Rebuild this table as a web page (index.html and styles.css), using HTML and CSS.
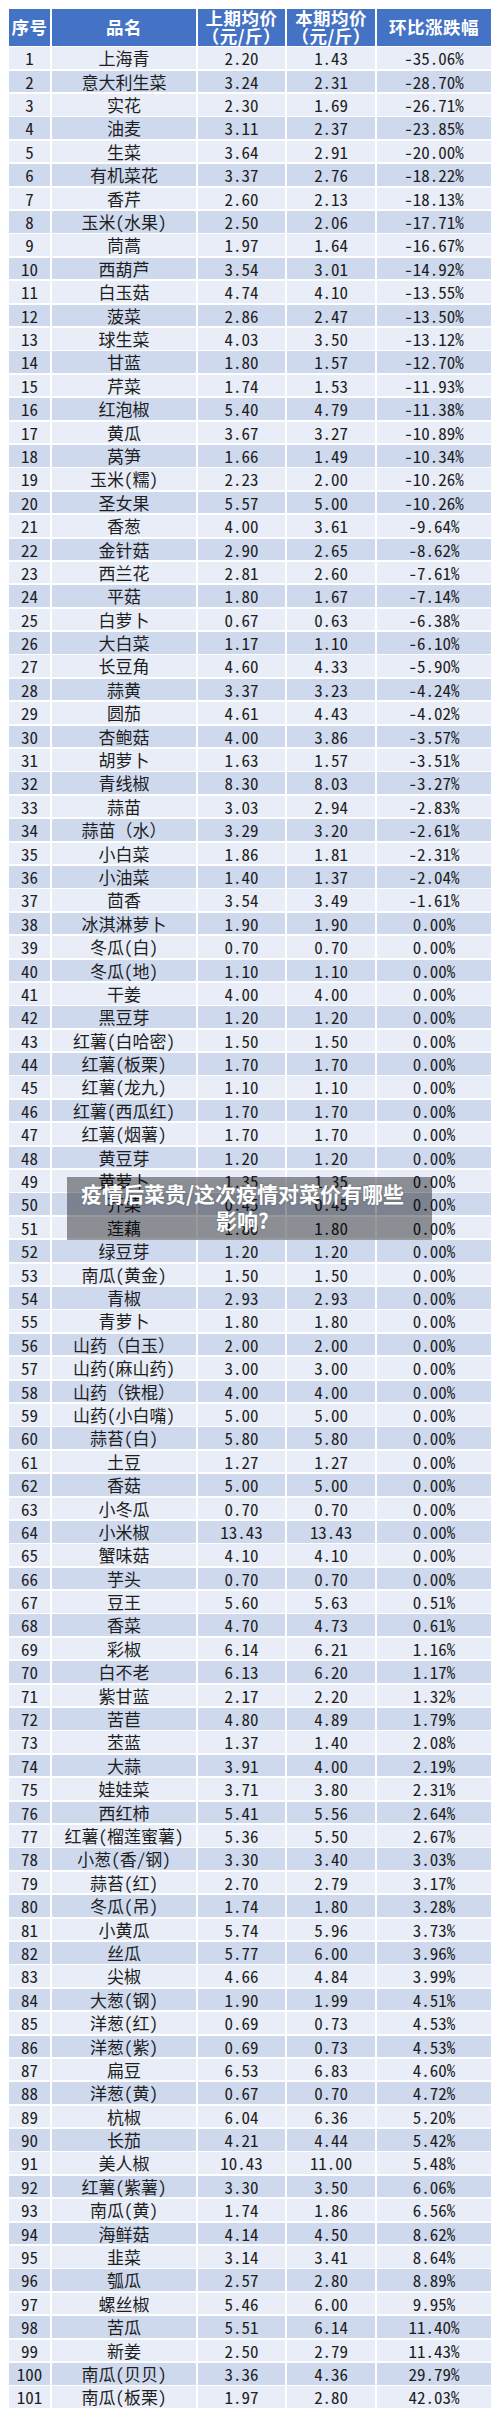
FILE: index.html
```html
<!DOCTYPE html>
<html lang="zh-CN">
<head>
<meta charset="utf-8">
<title>疫情后菜贵/这次疫情对菜价有哪些影响?</title>
<link rel="stylesheet" href="styles.css">
</head>
<body>
<div class="page">
  <div class="table">
    <div class="row head">
      <div class="c">序号</div>
      <div class="c">品名</div>
      <div class="c two">上期均价<br>（元/斤）</div>
      <div class="c two">本期均价<br>（元/斤）</div>
      <div class="c">环比涨跌幅</div>
    </div>
    <div class="tbody">
      <div class="row"><div class="c">1</div><div class="c n">上海青</div><div class="c">2.20</div><div class="c">1.43</div><div class="c">-35.06%</div></div>
      <div class="row"><div class="c">2</div><div class="c n">意大利生菜</div><div class="c">3.24</div><div class="c">2.31</div><div class="c">-28.70%</div></div>
      <div class="row"><div class="c">3</div><div class="c n">实花</div><div class="c">2.30</div><div class="c">1.69</div><div class="c">-26.71%</div></div>
      <div class="row"><div class="c">4</div><div class="c n">油麦</div><div class="c">3.11</div><div class="c">2.37</div><div class="c">-23.85%</div></div>
      <div class="row"><div class="c">5</div><div class="c n">生菜</div><div class="c">3.64</div><div class="c">2.91</div><div class="c">-20.00%</div></div>
      <div class="row"><div class="c">6</div><div class="c n">有机菜花</div><div class="c">3.37</div><div class="c">2.76</div><div class="c">-18.22%</div></div>
      <div class="row"><div class="c">7</div><div class="c n">香芹</div><div class="c">2.60</div><div class="c">2.13</div><div class="c">-18.13%</div></div>
      <div class="row"><div class="c">8</div><div class="c n">玉米(水果)</div><div class="c">2.50</div><div class="c">2.06</div><div class="c">-17.71%</div></div>
      <div class="row"><div class="c">9</div><div class="c n">茼蒿</div><div class="c">1.97</div><div class="c">1.64</div><div class="c">-16.67%</div></div>
      <div class="row"><div class="c">10</div><div class="c n">西葫芦</div><div class="c">3.54</div><div class="c">3.01</div><div class="c">-14.92%</div></div>
      <div class="row"><div class="c">11</div><div class="c n">白玉菇</div><div class="c">4.74</div><div class="c">4.10</div><div class="c">-13.55%</div></div>
      <div class="row"><div class="c">12</div><div class="c n">菠菜</div><div class="c">2.86</div><div class="c">2.47</div><div class="c">-13.50%</div></div>
      <div class="row"><div class="c">13</div><div class="c n">球生菜</div><div class="c">4.03</div><div class="c">3.50</div><div class="c">-13.12%</div></div>
      <div class="row"><div class="c">14</div><div class="c n">甘蓝</div><div class="c">1.80</div><div class="c">1.57</div><div class="c">-12.70%</div></div>
      <div class="row"><div class="c">15</div><div class="c n">芹菜</div><div class="c">1.74</div><div class="c">1.53</div><div class="c">-11.93%</div></div>
      <div class="row"><div class="c">16</div><div class="c n">红泡椒</div><div class="c">5.40</div><div class="c">4.79</div><div class="c">-11.38%</div></div>
      <div class="row"><div class="c">17</div><div class="c n">黄瓜</div><div class="c">3.67</div><div class="c">3.27</div><div class="c">-10.89%</div></div>
      <div class="row"><div class="c">18</div><div class="c n">莴笋</div><div class="c">1.66</div><div class="c">1.49</div><div class="c">-10.34%</div></div>
      <div class="row"><div class="c">19</div><div class="c n">玉米(糯)</div><div class="c">2.23</div><div class="c">2.00</div><div class="c">-10.26%</div></div>
      <div class="row"><div class="c">20</div><div class="c n">圣女果</div><div class="c">5.57</div><div class="c">5.00</div><div class="c">-10.26%</div></div>
      <div class="row"><div class="c">21</div><div class="c n">香葱</div><div class="c">4.00</div><div class="c">3.61</div><div class="c">-9.64%</div></div>
      <div class="row"><div class="c">22</div><div class="c n">金针菇</div><div class="c">2.90</div><div class="c">2.65</div><div class="c">-8.62%</div></div>
      <div class="row"><div class="c">23</div><div class="c n">西兰花</div><div class="c">2.81</div><div class="c">2.60</div><div class="c">-7.61%</div></div>
      <div class="row"><div class="c">24</div><div class="c n">平菇</div><div class="c">1.80</div><div class="c">1.67</div><div class="c">-7.14%</div></div>
      <div class="row"><div class="c">25</div><div class="c n">白萝卜</div><div class="c">0.67</div><div class="c">0.63</div><div class="c">-6.38%</div></div>
      <div class="row"><div class="c">26</div><div class="c n">大白菜</div><div class="c">1.17</div><div class="c">1.10</div><div class="c">-6.10%</div></div>
      <div class="row"><div class="c">27</div><div class="c n">长豆角</div><div class="c">4.60</div><div class="c">4.33</div><div class="c">-5.90%</div></div>
      <div class="row"><div class="c">28</div><div class="c n">蒜黄</div><div class="c">3.37</div><div class="c">3.23</div><div class="c">-4.24%</div></div>
      <div class="row"><div class="c">29</div><div class="c n">圆茄</div><div class="c">4.61</div><div class="c">4.43</div><div class="c">-4.02%</div></div>
      <div class="row"><div class="c">30</div><div class="c n">杏鲍菇</div><div class="c">4.00</div><div class="c">3.86</div><div class="c">-3.57%</div></div>
      <div class="row"><div class="c">31</div><div class="c n">胡萝卜</div><div class="c">1.63</div><div class="c">1.57</div><div class="c">-3.51%</div></div>
      <div class="row"><div class="c">32</div><div class="c n">青线椒</div><div class="c">8.30</div><div class="c">8.03</div><div class="c">-3.27%</div></div>
      <div class="row"><div class="c">33</div><div class="c n">蒜苗</div><div class="c">3.03</div><div class="c">2.94</div><div class="c">-2.83%</div></div>
      <div class="row"><div class="c">34</div><div class="c n">蒜苗（水）</div><div class="c">3.29</div><div class="c">3.20</div><div class="c">-2.61%</div></div>
      <div class="row"><div class="c">35</div><div class="c n">小白菜</div><div class="c">1.86</div><div class="c">1.81</div><div class="c">-2.31%</div></div>
      <div class="row"><div class="c">36</div><div class="c n">小油菜</div><div class="c">1.40</div><div class="c">1.37</div><div class="c">-2.04%</div></div>
      <div class="row"><div class="c">37</div><div class="c n">茴香</div><div class="c">3.54</div><div class="c">3.49</div><div class="c">-1.61%</div></div>
      <div class="row"><div class="c">38</div><div class="c n">冰淇淋萝卜</div><div class="c">1.90</div><div class="c">1.90</div><div class="c">0.00%</div></div>
      <div class="row"><div class="c">39</div><div class="c n">冬瓜(白)</div><div class="c">0.70</div><div class="c">0.70</div><div class="c">0.00%</div></div>
      <div class="row"><div class="c">40</div><div class="c n">冬瓜(地)</div><div class="c">1.10</div><div class="c">1.10</div><div class="c">0.00%</div></div>
      <div class="row"><div class="c">41</div><div class="c n">干姜</div><div class="c">4.00</div><div class="c">4.00</div><div class="c">0.00%</div></div>
      <div class="row"><div class="c">42</div><div class="c n">黑豆芽</div><div class="c">1.20</div><div class="c">1.20</div><div class="c">0.00%</div></div>
      <div class="row"><div class="c">43</div><div class="c n">红薯(白哈密)</div><div class="c">1.50</div><div class="c">1.50</div><div class="c">0.00%</div></div>
      <div class="row"><div class="c">44</div><div class="c n">红薯(板栗)</div><div class="c">1.70</div><div class="c">1.70</div><div class="c">0.00%</div></div>
      <div class="row"><div class="c">45</div><div class="c n">红薯(龙九)</div><div class="c">1.10</div><div class="c">1.10</div><div class="c">0.00%</div></div>
      <div class="row"><div class="c">46</div><div class="c n">红薯(西瓜红)</div><div class="c">1.70</div><div class="c">1.70</div><div class="c">0.00%</div></div>
      <div class="row"><div class="c">47</div><div class="c n">红薯(烟薯)</div><div class="c">1.70</div><div class="c">1.70</div><div class="c">0.00%</div></div>
      <div class="row"><div class="c">48</div><div class="c n">黄豆芽</div><div class="c">1.20</div><div class="c">1.20</div><div class="c">0.00%</div></div>
      <div class="row"><div class="c">49</div><div class="c n">黄萝卜</div><div class="c">1.35</div><div class="c">1.35</div><div class="c">0.00%</div></div>
      <div class="row"><div class="c">50</div><div class="c n">芥菜</div><div class="c">0.45</div><div class="c">0.45</div><div class="c">0.00%</div></div>
      <div class="row"><div class="c">51</div><div class="c n">莲藕</div><div class="c">1.80</div><div class="c">1.80</div><div class="c">0.00%</div></div>
      <div class="row"><div class="c">52</div><div class="c n">绿豆芽</div><div class="c">1.20</div><div class="c">1.20</div><div class="c">0.00%</div></div>
      <div class="row"><div class="c">53</div><div class="c n">南瓜(黄金)</div><div class="c">1.50</div><div class="c">1.50</div><div class="c">0.00%</div></div>
      <div class="row"><div class="c">54</div><div class="c n">青椒</div><div class="c">2.93</div><div class="c">2.93</div><div class="c">0.00%</div></div>
      <div class="row"><div class="c">55</div><div class="c n">青萝卜</div><div class="c">1.80</div><div class="c">1.80</div><div class="c">0.00%</div></div>
      <div class="row"><div class="c">56</div><div class="c n">山药（白玉）</div><div class="c">2.00</div><div class="c">2.00</div><div class="c">0.00%</div></div>
      <div class="row"><div class="c">57</div><div class="c n">山药(麻山药)</div><div class="c">3.00</div><div class="c">3.00</div><div class="c">0.00%</div></div>
      <div class="row"><div class="c">58</div><div class="c n">山药（铁棍）</div><div class="c">4.00</div><div class="c">4.00</div><div class="c">0.00%</div></div>
      <div class="row"><div class="c">59</div><div class="c n">山药(小白嘴)</div><div class="c">5.00</div><div class="c">5.00</div><div class="c">0.00%</div></div>
      <div class="row"><div class="c">60</div><div class="c n">蒜苔(白)</div><div class="c">5.80</div><div class="c">5.80</div><div class="c">0.00%</div></div>
      <div class="row"><div class="c">61</div><div class="c n">土豆</div><div class="c">1.27</div><div class="c">1.27</div><div class="c">0.00%</div></div>
      <div class="row"><div class="c">62</div><div class="c n">香菇</div><div class="c">5.00</div><div class="c">5.00</div><div class="c">0.00%</div></div>
      <div class="row"><div class="c">63</div><div class="c n">小冬瓜</div><div class="c">0.70</div><div class="c">0.70</div><div class="c">0.00%</div></div>
      <div class="row"><div class="c">64</div><div class="c n">小米椒</div><div class="c">13.43</div><div class="c">13.43</div><div class="c">0.00%</div></div>
      <div class="row"><div class="c">65</div><div class="c n">蟹味菇</div><div class="c">4.10</div><div class="c">4.10</div><div class="c">0.00%</div></div>
      <div class="row"><div class="c">66</div><div class="c n">芋头</div><div class="c">0.70</div><div class="c">0.70</div><div class="c">0.00%</div></div>
      <div class="row"><div class="c">67</div><div class="c n">豆王</div><div class="c">5.60</div><div class="c">5.63</div><div class="c">0.51%</div></div>
      <div class="row"><div class="c">68</div><div class="c n">香菜</div><div class="c">4.70</div><div class="c">4.73</div><div class="c">0.61%</div></div>
      <div class="row"><div class="c">69</div><div class="c n">彩椒</div><div class="c">6.14</div><div class="c">6.21</div><div class="c">1.16%</div></div>
      <div class="row"><div class="c">70</div><div class="c n">白不老</div><div class="c">6.13</div><div class="c">6.20</div><div class="c">1.17%</div></div>
      <div class="row"><div class="c">71</div><div class="c n">紫甘蓝</div><div class="c">2.17</div><div class="c">2.20</div><div class="c">1.32%</div></div>
      <div class="row"><div class="c">72</div><div class="c n">苦苣</div><div class="c">4.80</div><div class="c">4.89</div><div class="c">1.79%</div></div>
      <div class="row"><div class="c">73</div><div class="c n">苤蓝</div><div class="c">1.37</div><div class="c">1.40</div><div class="c">2.08%</div></div>
      <div class="row"><div class="c">74</div><div class="c n">大蒜</div><div class="c">3.91</div><div class="c">4.00</div><div class="c">2.19%</div></div>
      <div class="row"><div class="c">75</div><div class="c n">娃娃菜</div><div class="c">3.71</div><div class="c">3.80</div><div class="c">2.31%</div></div>
      <div class="row"><div class="c">76</div><div class="c n">西红柿</div><div class="c">5.41</div><div class="c">5.56</div><div class="c">2.64%</div></div>
      <div class="row"><div class="c">77</div><div class="c n">红薯(榴莲蜜薯)</div><div class="c">5.36</div><div class="c">5.50</div><div class="c">2.67%</div></div>
      <div class="row"><div class="c">78</div><div class="c n">小葱(香/钢)</div><div class="c">3.30</div><div class="c">3.40</div><div class="c">3.03%</div></div>
      <div class="row"><div class="c">79</div><div class="c n">蒜苔(红)</div><div class="c">2.70</div><div class="c">2.79</div><div class="c">3.17%</div></div>
      <div class="row"><div class="c">80</div><div class="c n">冬瓜(吊)</div><div class="c">1.74</div><div class="c">1.80</div><div class="c">3.28%</div></div>
      <div class="row"><div class="c">81</div><div class="c n">小黄瓜</div><div class="c">5.74</div><div class="c">5.96</div><div class="c">3.73%</div></div>
      <div class="row"><div class="c">82</div><div class="c n">丝瓜</div><div class="c">5.77</div><div class="c">6.00</div><div class="c">3.96%</div></div>
      <div class="row"><div class="c">83</div><div class="c n">尖椒</div><div class="c">4.66</div><div class="c">4.84</div><div class="c">3.99%</div></div>
      <div class="row"><div class="c">84</div><div class="c n">大葱(钢)</div><div class="c">1.90</div><div class="c">1.99</div><div class="c">4.51%</div></div>
      <div class="row"><div class="c">85</div><div class="c n">洋葱(红)</div><div class="c">0.69</div><div class="c">0.73</div><div class="c">4.53%</div></div>
      <div class="row"><div class="c">86</div><div class="c n">洋葱(紫)</div><div class="c">0.69</div><div class="c">0.73</div><div class="c">4.53%</div></div>
      <div class="row"><div class="c">87</div><div class="c n">扁豆</div><div class="c">6.53</div><div class="c">6.83</div><div class="c">4.60%</div></div>
      <div class="row"><div class="c">88</div><div class="c n">洋葱(黄)</div><div class="c">0.67</div><div class="c">0.70</div><div class="c">4.72%</div></div>
      <div class="row"><div class="c">89</div><div class="c n">杭椒</div><div class="c">6.04</div><div class="c">6.36</div><div class="c">5.20%</div></div>
      <div class="row"><div class="c">90</div><div class="c n">长茄</div><div class="c">4.21</div><div class="c">4.44</div><div class="c">5.42%</div></div>
      <div class="row"><div class="c">91</div><div class="c n">美人椒</div><div class="c">10.43</div><div class="c">11.00</div><div class="c">5.48%</div></div>
      <div class="row"><div class="c">92</div><div class="c n">红薯(紫薯)</div><div class="c">3.30</div><div class="c">3.50</div><div class="c">6.06%</div></div>
      <div class="row"><div class="c">93</div><div class="c n">南瓜(黄)</div><div class="c">1.74</div><div class="c">1.86</div><div class="c">6.56%</div></div>
      <div class="row"><div class="c">94</div><div class="c n">海鲜菇</div><div class="c">4.14</div><div class="c">4.50</div><div class="c">8.62%</div></div>
      <div class="row"><div class="c">95</div><div class="c n">韭菜</div><div class="c">3.14</div><div class="c">3.41</div><div class="c">8.64%</div></div>
      <div class="row"><div class="c">96</div><div class="c n">瓠瓜</div><div class="c">2.57</div><div class="c">2.80</div><div class="c">8.89%</div></div>
      <div class="row"><div class="c">97</div><div class="c n">螺丝椒</div><div class="c">5.46</div><div class="c">6.00</div><div class="c">9.95%</div></div>
      <div class="row"><div class="c">98</div><div class="c n">苦瓜</div><div class="c">5.51</div><div class="c">6.14</div><div class="c">11.40%</div></div>
      <div class="row"><div class="c">99</div><div class="c n">新姜</div><div class="c">2.50</div><div class="c">2.79</div><div class="c">11.43%</div></div>
      <div class="row"><div class="c">100</div><div class="c n">南瓜(贝贝)</div><div class="c">3.36</div><div class="c">4.36</div><div class="c">29.79%</div></div>
      <div class="row"><div class="c">101</div><div class="c n">南瓜(板栗)</div><div class="c">1.97</div><div class="c">2.80</div><div class="c">42.03%</div></div>
    </div>
  </div>
  <div class="caption">疫情后菜贵/这次疫情对菜价有哪些影响?</div>
</div>
</body>
</html>
```

FILE: styles.css
```css
html, body {
  margin: 0;
  padding: 0;
  background: #ffffff;
}

.page {
  position: relative;
  width: 500px;
  height: 2418px;
}

.table {
  display: flex;
  flex-direction: column;
  gap: 1.8px;
  padding: 9px 0 0 9px;
}

.tbody {
  display: flex;
  flex-direction: column;
  gap: 1.81px;
}

.row {
  display: grid;
  grid-template-columns: 41px 143.4px 87px 87.7px 113.4px;
  column-gap: 2.3px;
  height: 21.6px;
  font-family: "Noto Sans Mono CJK SC", "Noto Sans CJK SC", "DejaVu Sans Mono", monospace;
  font-size: 17px;
  color: #1e1e1e;
}

.row .c {
  background: #e8edf7;
  display: flex;
  align-items: center;
  justify-content: center;
  line-height: 21.6px;
  white-space: nowrap;
}

.tbody .row:nth-child(even) .c {
  background: #cfd9ee;
}

.row.head {
  height: 36.5px;
  font-family: "Noto Sans CJK SC", sans-serif;
  font-weight: 700;
  font-size: 17.5px;
  color: #ffffff;
}

.row.head .c {
  background: #4472c4;
  line-height: 18px;
  text-align: center;
  letter-spacing: 0.5px;
}

.caption {
  position: absolute;
  left: 67px;
  top: 1177px;
  width: 365px;
  height: 63px;
  box-sizing: border-box;
  padding: 3px 22px 0 8px;
  background: rgba(0, 0, 0, 0.4);
  color: #ffffff;
  font-family: "Noto Sans CJK SC", sans-serif;
  font-weight: 700;
  font-size: 21px;
  line-height: 27px;
  text-align: center;
  text-shadow: 0 0 2px rgba(0, 0, 0, 0.25);
}
```
